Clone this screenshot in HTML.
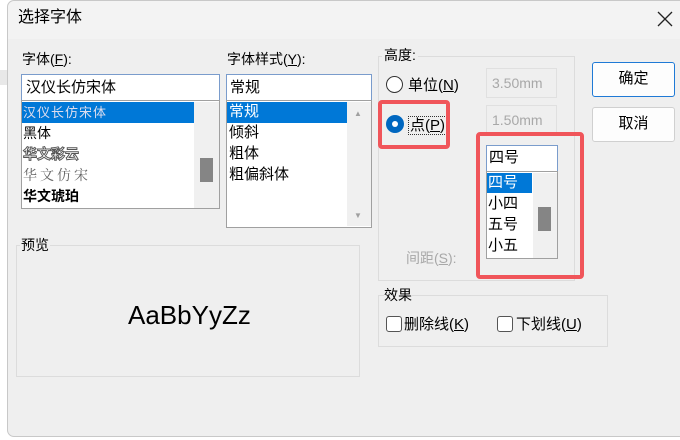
<!DOCTYPE html>
<html><head><meta charset="utf-8"><style>
*{margin:0;padding:0;box-sizing:border-box}
body{width:680px;height:440px;background:#fff;position:relative;overflow:hidden;font-family:"Liberation Sans","Noto Sans CJK SC",sans-serif;color:#000;font-size:14px}
.a{position:absolute;white-space:nowrap;line-height:1}
.dlg{position:absolute;left:7px;top:0;width:690px;height:437px;background:#efefef;border:1px solid #c8c8c8;border-radius:7px}
.box{position:absolute;background:#fff;border:1px solid #a0a0a0}
.grp{position:absolute;border:1px solid #dcdcdc}
.sel{position:absolute;background:#0078d7;color:#fff}
.red{position:absolute;border:4px solid #f0555a;border-radius:4px}
.dis{position:absolute;border:1px solid #e0e0e0;background:#efefef;color:#a8a8a8;font-size:14px;padding-left:5px;line-height:28px}
.btn{position:absolute;background:#fdfdfd;border:1px solid #d0d0d0;border-radius:3px;text-align:center;line-height:32px;font-size:15px}
.thumb{position:absolute;background:#858585}
.cb{position:absolute;width:16px;height:16px;border:1px solid #555;border-radius:3px;background:#fff}
</style></head><body>
<div class="a" style="left:0;top:70px;width:7px;height:15px;background:#e8e8e8"></div>
<div class="dlg"></div>
<div class="a" style="left:8px;top:1px;width:672px;height:38px;background:#f3f3f3;border-radius:7px 0 0 0"></div>
<div class="a" style="left:18px;top:10px;font-size:16px">选择字体</div>
<svg class="a" style="left:655px;top:9px" width="20" height="20"><path d="M3 3L17 17M17 3L3 17" stroke="#222" stroke-width="1.3" fill="none"/></svg>

<div class="a" style="left:22px;top:52px">字体(<u>F</u>):</div>
<div class="box" style="left:21px;top:74px;width:199px;height:27px;border-color:#7a9ccc"></div>
<div class="a" style="left:26px;top:80px;font-size:15px">汉仪长仿宋体</div>
<div class="box" style="left:21px;top:100px;width:199px;height:109px"></div>
<div class="sel" style="left:22px;top:102px;width:172px;height:21px"></div>
<div class="a" style="left:23px;top:106px;font-size:13px;color:#dde;letter-spacing:1px">汉仪长仿宋体</div>
<div class="a" style="left:23px;top:126px;font-size:14px">黑体</div>
<div class="a" style="left:23px;top:147px;font-size:14px;font-weight:bold;color:#fff;-webkit-text-stroke:1px #555">华文彩云</div>
<div class="a" style="left:23px;top:168px;font-size:14px;color:#666;letter-spacing:3px;font-family:'Noto Serif CJK SC',serif">华文仿宋</div>
<div class="a" style="left:23px;top:189px;font-size:14px;font-weight:bold">华文琥珀</div>
<div class="a" style="left:194px;top:102px;width:25px;height:106px;background:#f0f0f0"></div>
<div class="thumb" style="left:200px;top:158px;width:13px;height:24px"></div>

<div class="a" style="left:227px;top:52px">字体样式(<u>Y</u>):</div>
<div class="box" style="left:226px;top:74px;width:146px;height:27px;border-color:#7a9ccc"></div>
<div class="a" style="left:230px;top:80px;font-size:15px">常规</div>
<div class="box" style="left:226px;top:100px;width:146px;height:128px"></div>
<div class="sel" style="left:227px;top:102px;width:120px;height:21px"></div>
<div class="a" style="left:229px;top:104px;font-size:15px;color:#fff">常规</div>
<div class="a" style="left:229px;top:125px;font-size:15px">倾斜</div>
<div class="a" style="left:229px;top:146px;font-size:15px">粗体</div>
<div class="a" style="left:229px;top:167px;font-size:15px">粗偏斜体</div>
<div class="a" style="left:347px;top:102px;width:24px;height:124px;background:#f0f0f0"></div>
<div class="a" style="left:354px;top:110px;font-size:8px;color:#a0a0a0">▲</div>
<div class="a" style="left:354px;top:212px;font-size:8px;color:#a0a0a0">▼</div>

<div class="grp" style="left:378px;top:56px;width:197px;height:225px"></div>
<div class="a" style="left:382px;top:48px;background:#efefef;padding:0 2px">高度:</div>
<div class="a" style="left:386px;top:76px;width:17px;height:17px;border:1.5px solid #333;border-radius:50%;background:#fff"></div>
<div class="a" style="left:408px;top:78px;font-size:15px">单位(<u>N</u>)</div>
<div class="dis" style="left:486px;top:68px;width:71px;height:30px">3.50mm</div>
<div class="a" style="left:386px;top:115px;width:18px;height:18px;border-radius:50%;background:#0067c0"></div>
<div class="a" style="left:392px;top:121px;width:6px;height:6px;border-radius:50%;background:#fff"></div>
<div class="a" style="left:408px;top:116px;font-size:15px;border:1px dotted #333;padding:1px 1px">点(<u>P</u>)</div>
<div class="dis" style="left:486px;top:105px;width:71px;height:30px">1.50mm</div>
<div class="red" style="left:378px;top:100px;width:72px;height:49px"></div>

<div class="box" style="left:486px;top:145px;width:72px;height:27px;border-color:#7a9ccc"></div>
<div class="a" style="left:489px;top:150px;font-size:15px">四号</div>
<div class="box" style="left:486px;top:171px;width:72px;height:88px"></div>
<div class="sel" style="left:487px;top:173px;width:45px;height:20px"></div>
<div class="a" style="left:488px;top:175px;font-size:15px;color:#fff">四号</div>
<div class="a" style="left:488px;top:196px;font-size:15px">小四</div>
<div class="a" style="left:488px;top:217px;font-size:15px">五号</div>
<div class="a" style="left:488px;top:238px;font-size:15px">小五</div>
<div class="a" style="left:533px;top:173px;width:24px;height:85px;background:#f0f0f0"></div>
<div class="thumb" style="left:538px;top:207px;width:13px;height:24px"></div>
<div class="red" style="left:476px;top:132px;width:108px;height:147px"></div>
<div class="a" style="left:406px;top:251px;color:#a8a8a8">间距(<u>S</u>):</div>

<div class="btn" style="left:592px;top:62px;width:83px;height:35px;border-color:#1f7ad6">确定</div>
<div class="btn" style="left:592px;top:107px;width:83px;height:35px">取消</div>

<div class="grp" style="left:16px;top:245px;width:344px;height:132px"></div>
<div class="a" style="left:20px;top:238px;background:#efefef;padding:0 1px">预览</div>
<div class="a" style="left:128px;top:302px;font-size:26px;font-family:'Liberation Sans',sans-serif">AaBbYyZz</div>

<div class="grp" style="left:378px;top:295px;width:230px;height:52px"></div>
<div class="a" style="left:384px;top:288px;background:#efefef">效果</div>
<div class="cb" style="left:386px;top:316px"></div>
<div class="a" style="left:404px;top:317px;font-size:15px">删除线(<u>K</u>)</div>
<div class="cb" style="left:497px;top:316px"></div>
<div class="a" style="left:516px;top:317px;font-size:15px">下划线(<u>U</u>)</div>
</body></html>
